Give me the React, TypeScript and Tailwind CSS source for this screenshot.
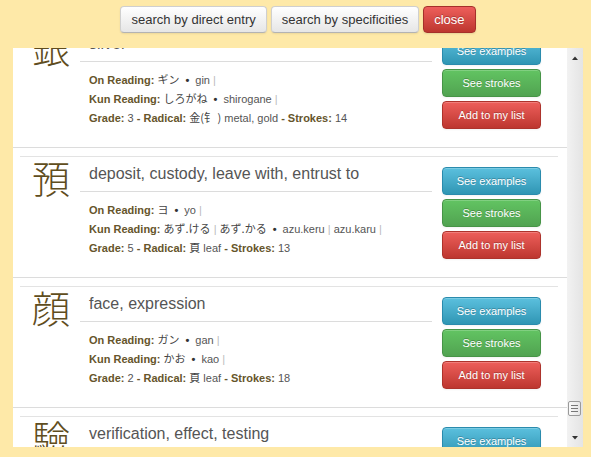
import React from "react";

type Entry = {
  kanji: string;
  meaning: string;
  on: string[];
  onR: string[];
  kun: string[];
  kunR: string[];
  grade: number;
  radical: string;
  radMeaning: string;
  strokes: number;
};

const entries: Entry[] = [
  { kanji: "銀", meaning: "silver", on: ["ギン"], onR: ["gin"], kun: ["しろがね"], kunR: ["shirogane"], grade: 3, radical: "金(钅 )", radMeaning: "metal, gold", strokes: 14 },
  { kanji: "預", meaning: "deposit, custody, leave with, entrust to", on: ["ヨ"], onR: ["yo"], kun: ["あず.ける", "あず.かる"], kunR: ["azu.keru", "azu.karu"], grade: 5, radical: "頁", radMeaning: "leaf", strokes: 13 },
  { kanji: "顔", meaning: "face, expression", on: ["ガン"], onR: ["gan"], kun: ["かお"], kunR: ["kao"], grade: 2, radical: "頁", radMeaning: "leaf", strokes: 18 },
  { kanji: "驗", meaning: "verification, effect, testing", on: ["ケン"], onR: ["ken"], kun: ["あかし"], kunR: ["akashi"], grade: 4, radical: "馬", radMeaning: "horse", strokes: 23 },
];

const sans = "font-['Liberation_Sans',Arial,'Noto_Sans_CJK_JP',sans-serif]";

const Reading = ({ label, jp, romaji }: { label: string; jp: string[]; romaji: string[] }) => (
  <div className="h-[19px] whitespace-nowrap">
    <span className="font-bold text-[#66552b]">{label}</span>{" "}
    {jp.map((j, i) => (
      <React.Fragment key={i}>
        {i > 0 && <span className="text-[#bbb]"> | </span>}
        <span className="font-['Noto_Sans_CJK_JP',sans-serif] text-[11px] leading-[19px] text-[#444]">{j}</span>
      </React.Fragment>
    ))}
    <span className="mx-[6px] font-bold text-[#333]">•</span>
    {romaji.map((r, i) => (
      <React.Fragment key={i}>
        {r} <span className="text-[#bbb]">|</span>{" "}
      </React.Fragment>
    ))}
  </div>
);

const SmallBtn = ({ label, cls }: { label: string; cls: string }) => (
  <div
    className={`flex h-[28px] w-[99px] items-center justify-center rounded-[4px] border text-[11px] text-white [text-shadow:0_-1px_0_rgba(0,0,0,0.25)] shadow-[inset_0_1px_0_rgba(255,255,255,0.2),0_1px_2px_rgba(0,0,0,0.05)] ${cls}`}
  >
    {label}
  </div>
);

const Item = ({ e }: { e: Entry }) => (
  <div className="border-b border-[#dcdcdc] pt-[8px]">
    <div className="ml-[7px] mr-[9px] flex h-[121px] border-t border-[#e3e3e3]">
      <div className="w-[60px] pl-[2px] pt-[1px] text-center font-['Noto_Sans_CJK_JP',serif] text-[38px] font-light leading-[38px] text-[#5f4d20]">
        {e.kanji}
      </div>
      <div className="w-[352px]">
        <div className="border-b border-[#dcdcdc] pb-[7px] pl-[9px] pt-[7px] text-[16px] leading-[20px] text-[#555]">
          {e.meaning}
        </div>
        <div className="mt-[8px] pl-[9px] text-[11px] leading-[19px] text-[#555]">
          <Reading label="On Reading:" jp={e.on} romaji={e.onR} />
          <Reading label="Kun Reading:" jp={e.kun} romaji={e.kunR} />
          <div className="h-[19px] whitespace-nowrap">
            <span className="font-bold text-[#66552b]">Grade:</span> {e.grade}{" "}
            <span className="font-bold text-[#66552b]">- Radical:</span>{" "}
            <span className="font-['Noto_Sans_CJK_JP',sans-serif] leading-[19px] text-[#444]">{e.radical}</span> {e.radMeaning}{" "}
            <span className="font-bold text-[#66552b]">- Strokes:</span> {e.strokes}
          </div>
        </div>
      </div>
      <div className="ml-[10px] flex flex-col gap-[4px] pt-[10px]">
        <SmallBtn label="See examples" cls="border-[#2a8bad] bg-gradient-to-b from-[#5bc0de] to-[#2f96b4]" />
        <SmallBtn label="See strokes" cls="border-[#479447] bg-gradient-to-b from-[#62c462] to-[#51a351]" />
        <SmallBtn label="Add to my list" cls="border-[#ad332c] bg-gradient-to-b from-[#ee5f5b] to-[#bd362f]" />
      </div>
    </div>
  </div>
);

const TopBtn = ({ label, danger }: { label: string; danger?: boolean }) => (
  <div
    className={
      danger
        ? "flex h-[27px] items-center rounded-[4px] border border-[#a5302a] bg-gradient-to-b from-[#ee5f5b] to-[#bd362f] px-[10px] text-[13px] text-white [text-shadow:0_-1px_0_rgba(0,0,0,0.25)] shadow-[0_1px_2px_rgba(0,0,0,0.1)]"
        : "flex h-[27px] items-center rounded-[4px] border border-[#cfcfcf] border-b-[#b3b3b3] bg-gradient-to-b from-white to-[#e6e6e6] px-[10px] text-[13px] text-[#333] shadow-[inset_0_1px_0_rgba(255,255,255,0.2),0_1px_2px_rgba(0,0,0,0.08)]"
    }
  >
    {label}
  </div>
);

export default function App() {
  return (
    <div className={`h-[457px] w-[591px] overflow-hidden bg-[#fee9a8] ${sans}`}>
      <div className="flex w-[583px] justify-center gap-[4px] pl-[13px] pt-[6px]">
        <TopBtn label="search by direct entry" />
        <TopBtn label="search by specificities" />
        <TopBtn label="close" danger />
      </div>
      <div className="ml-[13px] mt-[15px] flex h-[399px] w-[570px]">
        <div className="h-full w-[554px] overflow-hidden bg-white">
          <div className="-mt-[30px]">
            {entries.map((e) => (
              <Item key={e.kanji} e={e} />
            ))}
          </div>
        </div>
        <div className="relative flex h-full w-[16px] flex-col items-center bg-gradient-to-r from-[#f2f2f2] to-[#e4e4e4]">
          <svg width="16" height="16" viewBox="0 0 16 16" className="mt-[2px]">
            <path d="M5 10 L8 6.5 L11 10 Z" fill="#333" />
          </svg>
          <div className="flex-1" />
          <div className="mb-[14px] ml-[-2px] flex h-[15px] w-[13px] flex-col items-center justify-center gap-[2px] rounded-[2px] border border-[#9a9a9a] bg-gradient-to-r from-[#fafafa] to-[#e6e6e6]">
            <div className="h-px w-[7px] bg-[#777]" />
            <div className="h-px w-[7px] bg-[#777]" />
            <div className="h-px w-[7px] bg-[#777]" />
          </div>
          <svg width="16" height="16" viewBox="0 0 16 16" className="mb-[1px]">
            <path d="M5 6 L11 6 L8 9.5 Z" fill="#333" />
          </svg>
        </div>
      </div>
    </div>
  );
}
